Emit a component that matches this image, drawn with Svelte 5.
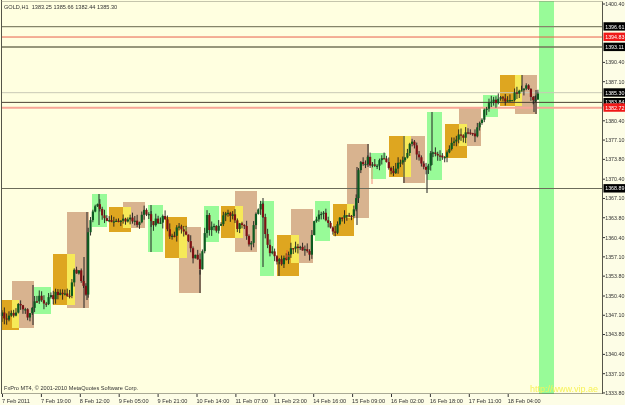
<script lang="ts">
	const PLOT_W = 603;
	const PLOT_H = 394;

	const priceY = (p: number) => 4.5 + (1400.4 - p) * 5.84;

	// x, y, w, h of the session boxes, in chart order
	const gold = [
		[2, 300, 17, 30], [53, 254, 22, 51], [109, 207, 22, 25], [165, 217, 22, 41],
		[221, 206, 22, 32], [277, 235, 22, 41], [333, 204, 21, 32], [389, 136, 22, 41],
		[445, 124, 22, 34], [500, 75, 22, 31]
	];
	const tan = [
		[12, 281, 22, 47], [67, 212, 22, 96], [123, 202, 22, 26], [179, 227, 22, 66],
		[235, 191, 22, 61], [291, 209, 22, 54], [347, 144, 22, 74], [403, 136, 22, 47],
		[459, 108, 22, 38], [515, 75, 22, 39]
	];
	const green = [
		[34, 287, 17, 27], [92, 194, 15, 33], [148, 205, 15, 47], [204, 206, 15, 36],
		[260, 201, 14, 75], [315, 201, 15, 40], [371, 153, 15, 26], [427, 112, 15, 68],
		[483, 95, 15, 22], [539, 1, 15, 393]
	];

	// gold and tan mix to yellow where they cross
	const overlap = gold.flatMap(([x, y, w, h]) =>
		tan.flatMap(([a, b, c, d]) => {
			const l = Math.max(x, a), r = Math.min(x + w, a + c);
			const t = Math.max(y, b), u = Math.min(y + h, b + d);
			return r > l && u > t ? [[l, t, r - l, u - t]] : [];
		})
	);

	const levels = [
		{ price: 1396.61, color: '#85856a', width: 1.4 },
		{ price: 1394.83, color: '#e8604c', width: 1 },
		{ price: 1393.11, color: '#75755a', width: 1.4 },
		{ price: 1385.3, color: '#c9c9b6', width: 1 },
		{ price: 1383.64, color: '#4e4234', width: 1 },
		{ price: 1382.72, color: '#f8a596', width: 1.8 },
		{ price: 1368.89, color: '#6c6c5a', width: 1.2 }
	];

	// rough close of the hourly bars, [x, y]
	const path = [
		[2, 316], [10, 317], [15, 313], [20, 303], [25, 310], [28, 315], [32, 305], [36, 298], [40, 298],
		[45, 303], [51, 298], [55, 295], [58, 296], [65, 296], [70, 294], [73, 275], [76, 270], [80, 275],
		[83, 285], [86, 292], [87, 290], [88, 232], [92, 212], [95, 205], [98, 200], [100, 210], [103, 222],
		[107, 218], [110, 225], [115, 222], [118, 225], [122, 222], [127, 217], [130, 214], [134, 222],
		[140, 222], [143, 212], [147, 212], [152, 222], [157, 222], [160, 220], [165, 218], [170, 235],
		[175, 232], [180, 228], [184, 232], [187, 238], [190, 250], [193, 255], [198, 258], [199, 265],
		[201, 278], [203, 240], [207, 216], [209, 228], [212, 230], [217, 228], [222, 220], [224, 212],
		[228, 213], [232, 217], [236, 221], [238, 228], [241, 222], [245, 225], [248, 241], [251, 243],
		[253, 227], [257, 213], [260, 203], [262, 210], [265, 233], [268, 250], [272, 253], [276, 262],
		[280, 262], [285, 258], [288, 255], [291, 248], [295, 243], [298, 248], [302, 252], [305, 252],
		[308, 253], [311, 253], [312, 230], [316, 220], [320, 216], [323, 215], [326, 220], [329, 228],
		[333, 230], [336, 232], [338, 223], [342, 218], [348, 215], [352, 213], [354, 212], [356, 197],
		[358, 172], [361, 165], [365, 163], [368, 157], [370, 165], [373, 167], [376, 170], [378, 165],
		[381, 158], [384, 158], [387, 163], [389, 172], [392, 173], [396, 168], [400, 163], [405, 160],
		[408, 150], [412, 143], [415, 150], [418, 157], [420, 163], [424, 170], [428, 173], [430, 150],
		[433, 150], [437, 157], [442, 157], [446, 152], [450, 148], [454, 142], [458, 138], [462, 137],
		[465, 133], [468, 130], [470, 133], [474, 138], [478, 127], [482, 117], [486, 110], [490, 103],
		[494, 99], [498, 102], [502, 98], [506, 102], [510, 100], [514, 95], [518, 92], [522, 88],
		[526, 88], [530, 92], [534, 100], [538, 96]
	];

	function closeAt(x: number) {
		for (let i = 1; i < path.length; i++) {
			if (x <= path[i][0]) {
				const [x0, y0] = path[i - 1];
				const [x1, y1] = path[i];
				return y0 + ((y1 - y0) * (x - x0)) / (x1 - x0);
			}
		}
		return path[path.length - 1][1];
	}

	// small seeded generator so every render gives the same bars
	let seed = 41;
	const rnd = () => {
		seed = (seed * 16807) % 2147483647;
		return seed / 2147483647;
	};

	const bars: { x: number; top: number; h: number; hi: number; lo: number; up: boolean }[] = [];
	let prev = 316;
	for (let x = 2; x <= 538; x += 2.33) {
		const close = closeAt(x) + (rnd() - 0.5) * 7;
		const top = Math.min(prev, close);
		const bottom = Math.max(prev, close);
		bars.push({
			x,
			top,
			h: Math.max(bottom - top, 1.2),
			hi: top - rnd() * 6,
			lo: bottom + rnd() * 6,
			up: close < prev
		});
		prev = close;
	}

	// the long shadows
	const wicks = [
		[33, 285, 325], [84, 257, 308], [87, 212, 300], [99, 194, 225], [151, 205, 252], [200, 270, 293],
		[263, 198, 267], [279, 262, 276], [357, 167, 225], [368, 144, 167], [427, 170, 193], [432, 112, 165],
		[404, 136, 183], [522, 75, 90], [536, 90, 114], [534, 96, 112]
	];

	const priceTicks = [
		1400.4, 1397.1, 1393.8, 1390.4, 1387.1, 1383.8, 1380.4, 1377.1, 1373.8, 1370.4, 1367.1,
		1363.8, 1360.4, 1357.1, 1353.8, 1350.4, 1347.1, 1343.8, 1340.4, 1337.1, 1333.8
	];
	const tags = [
		{ price: 1396.61, bg: '#000' }, { price: 1394.83, bg: '#f01818' }, { price: 1393.11, bg: '#000' },
		{ price: 1385.3, bg: '#000' }, { price: 1383.64, bg: '#000', text: '1383.84' },
		{ price: 1382.72, bg: '#f01818' }, { price: 1368.89, bg: '#000' }
	];
	const hidden = [1397.1, 1393.8, 1383.8];

	const times = [
		'7 Feb 2011', '7 Feb 19:00', '8 Feb 12:00', '9 Feb 05:00', '9 Feb 21:00', '10 Feb 14:00', '11 Feb 07:00',
		'11 Feb 23:00', '14 Feb 16:00', '15 Feb 09:00', '16 Feb 02:00', '16 Feb 18:00', '17 Feb 11:00', '18 Feb 04:00'
	];
</script>

<div class="chart">
	<svg class="plot" width={PLOT_W} height={PLOT_H} viewBox="0 0 {PLOT_W} {PLOT_H}">
		<g shape-rendering="crispEdges">
			{#each tan as [x, y, w, h]}<rect {x} {y} width={w} height={h} fill="#d8b38f" />{/each}
			{#each gold as [x, y, w, h]}<rect {x} {y} width={w} height={h} fill="#dea620" />{/each}
			{#each overlap as [x, y, w, h]}<rect {x} {y} width={w} height={h} fill="#f6e958" />{/each}
			{#each green as [x, y, w, h]}<rect {x} {y} width={w} height={h} fill="#98fb98" />{/each}
		</g>

		{#each levels as l}
			<line x1="1" x2={PLOT_W} y1={priceY(l.price)} y2={priceY(l.price)} stroke={l.color} stroke-width={l.width} />
		{/each}

		{#each wicks as [x, a, b]}
			<line x1={x} x2={x} y1={a} y2={b} stroke="#222" stroke-width="1" />
		{/each}
		<line x1="372" x2="372" y1="162" y2="184" stroke="#f08070" stroke-width="0.9" />
		{#each bars as b}
			<line x1={b.x} x2={b.x} y1={b.hi} y2={b.lo} stroke="#1c1c1c" stroke-width="0.9" />
			<rect x={b.x - 1.1} y={b.top} width="2.2" height={b.h} fill={b.up ? '#0c5a20' : '#7e1014'} />
		{/each}
		<line x1="286" x2="290" y1="256" y2="256" stroke="#f0552f" stroke-width="0.9" />
		<line x1="287" x2="287" y1="250" y2="259" stroke="#f0552f" stroke-width="0.9" />

		<text class="label" x="4" y="9">GOLD,H1  1383.25 1385.66 1382.44 1385.30</text>
		<text class="label" x="4" y="390">FxPro MT4, © 2001-2010 MetaQuotes Software Corp.</text>
		<text class="site" x="530" y="392">http://www.vip.ae</text>

		<path d="M1.5 0V394H603M602.5 394V1.5" fill="none" stroke="#55554a" stroke-width="1" />
		<path d="M1.5 1.5H602.5" fill="none" stroke="#8a8a78" stroke-width="1" stroke-dasharray="1 1" />
	</svg>

	<svg class="prices" width="22" height={PLOT_H} viewBox="0 0 22 {PLOT_H}">
		{#each priceTicks as p}
			{#if !hidden.includes(p)}
				<line x1="0" x2="2" y1={priceY(p) - 0.5} y2={priceY(p) - 0.5} stroke="#333" />
				<text class="label price" x="2.2" y={priceY(p) + 1.4}>{p.toFixed(2)}</text>
			{/if}
		{/each}
		{#each tags as t}
			<rect x="0.5" y={priceY(t.price) - 4.4} width="21.5" height="8.4" fill={t.bg} />
			<text class="label price tag" x="2.2" y={priceY(t.price) + 1.9}>{t.text ?? t.price.toFixed(2)}</text>
		{/each}
	</svg>

	<svg class="times" width="625" height="11" viewBox="0 0 625 11">
		{#each times as label, i}
			<line x1={2.5 + i * 38.9} x2={2.5 + i * 38.9} y1="0" y2="3" stroke="#333" />
			<text class="label" x={2 + i * 38.9} y="9">{label}</text>
		{/each}
	</svg>
</div>

<style>
	:global(body) {
		background: #fdfde6;
	}

	.chart {
		display: grid;
		grid-template-columns: 603px 22px;
		grid-template-rows: 394px 11px;
		width: 625px;
		height: 405px;
		overflow: hidden;
		background: #fdfde6;
		filter: blur(0.3px);
	}

	svg {
		display: block;
	}

	.plot {
		background: #ffffe0;
	}

	.prices {
		overflow: visible;
	}

	.times {
		grid-column: 1 / -1;
	}

	.label {
		font-family: 'Liberation Sans', Arial, sans-serif;
		font-size: 5.6px;
		fill: #333;
		white-space: pre;
	}

	.price {
		font-size: 5.3px;
	}

	.tag {
		fill: #fff;
	}

	.site {
		font-family: 'Liberation Sans', Arial, sans-serif;
		font-size: 9px;
		fill: #f7f25a;
	}
</style>
